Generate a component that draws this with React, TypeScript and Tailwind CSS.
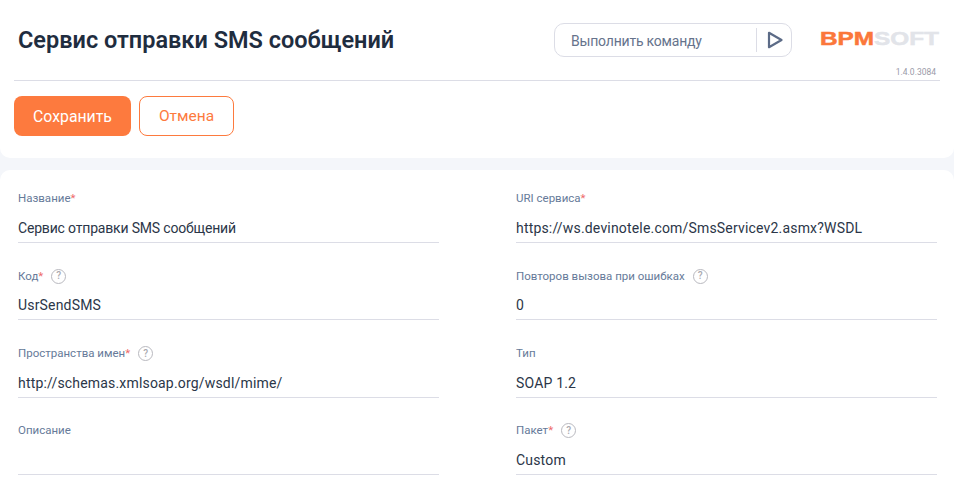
// App.tsx
// Service settings page: header card + form card

type Field = { label: string; value: string; required?: boolean; help?: boolean; cyr?: boolean };

const leftFields: Field[] = [
  { label: 'Название', value: 'Сервис отправки SMS сообщений', required: true, cyr: true },
  { label: 'Код', value: 'UsrSendSMS', required: true, help: true },
  { label: 'Пространства имен', value: 'http://schemas.xmlsoap.org/wsdl/mime/', required: true, help: true },
  { label: 'Описание', value: '' },
];

const rightFields: Field[] = [
  { label: 'URI сервиса', value: 'https://ws.devinotele.com/SmsServicev2.asmx?WSDL', required: true },
  { label: 'Повторов вызова при ошибках', value: '0', help: true },
  { label: 'Тип', value: 'SOAP 1.2' },
  { label: 'Пакет', value: 'Custom', required: true, help: true },
];

function HelpIcon() {
  return (
    <span className="ml-[8px] flex h-[15px] w-[15px] items-center justify-center rounded-full border border-[#b9b9bf] text-[10px] leading-none font-medium text-[#a9a9af]">
      ?
    </span>
  );
}

function FormField({ label, value, required, help, cyr }: Field) {
  return (
    <div className="h-[77.33px]">
      <div className="flex h-[18px] translate-y-px items-center text-[11.5px] text-[#667a99]">
        {label}
        {required && <span className="text-[#ee6a6a]">*</span>}
        {help && <HelpIcon />}
      </div>
      <div
        className={
          cyr
            ? 'mt-[3px] flex h-[33px] items-center border-b border-[#dcdde6] pt-[5px] text-[14px] tracking-[-0.18px] text-[#2b3648]'
            : 'mt-[3px] flex h-[33px] items-center border-b border-[#dcdde6] pt-[5px] text-[14px] tracking-[0.18px] text-[#2b3648]'
        }
      >
        {value}
      </div>
    </div>
  );
}

function Logo() {
  return (
    <svg width="120" height="16" viewBox="0 0 120 16" className="block overflow-visible">
      <text
        x="0"
        y="14"
        textLength="119"
        lengthAdjust="spacingAndGlyphs"
        fontFamily="'Liberation Sans', sans-serif"
        fontWeight="700"
        fontSize="19"
        fill="#e2e4e9"
        stroke="#e2e4e9"
        strokeWidth="0.5"
      >
        <tspan fill="#fb773a" stroke="#fb773a">BPM</tspan>SOFT
      </text>
    </svg>
  );
}

export default function App() {
  return (
    <div className="h-[488px] w-[954px] overflow-hidden bg-[#f4f6fa] font-['Roboto',sans-serif]">
      {/* Header */}
      <div className="h-[158px] rounded-b-[10px] bg-white px-[14px]">
        <div className="flex h-[81px] border-b border-[#dcdde6]">
          <h1 className="mt-[24px] ml-[4px] text-[23.5px] leading-[32px] font-semibold text-[#1f2d3f]">
            Сервис отправки SMS сообщений
          </h1>
          <div className="mt-[23px] ml-auto flex h-[34px] w-[238px] items-center rounded-[10px] border border-[#dcdde6] pl-[16px]">
            <span className="flex-1 translate-y-px text-[14px] tracking-[-0.2px] text-[#66738c]">Выполнить команду</span>
            <span className="h-[24px] w-px bg-[#dcdde6]" />
            <svg width="16" height="18" viewBox="0 0 16 18" className="mr-[8px] ml-[10px]">
              <path d="M2 1.8 L14.5 9 L2 16.2 Z" fill="none" stroke="#5c6b87" strokeWidth="2.2" strokeLinejoin="round" />
            </svg>
          </div>
          <div className="ml-[28px] flex w-[120px] flex-col items-end pt-[31px]">
            <Logo />
            <span className="mt-[20px] mr-[4px] text-[8.5px] leading-[10px] text-[#9a9aa8]">1.4.0.3084</span>
          </div>
        </div>
        <div className="mt-[15px] flex gap-2">
          <button className="h-[40px] w-[117px] rounded-[8px] bg-[#fd7a3e] pt-px text-[15.8px] text-white">Сохранить</button>
          <button className="h-[40px] w-[95px] rounded-[8px] border border-[#fd7a3e] bg-white pt-px text-[15.5px] text-[#fd7a3e]">Отмена</button>
        </div>
      </div>

      {/* Form */}
      <div className="mt-[12px] grid h-[318px] grid-cols-[421px_421px] gap-x-[77px] rounded-t-[10px] bg-white pt-[19px] pl-[18px]">
        <div>
          {leftFields.map((f) => (
            <FormField key={f.label} {...f} />
          ))}
        </div>
        <div>
          {rightFields.map((f) => (
            <FormField key={f.label} {...f} />
          ))}
        </div>
      </div>
    </div>
  );
}
